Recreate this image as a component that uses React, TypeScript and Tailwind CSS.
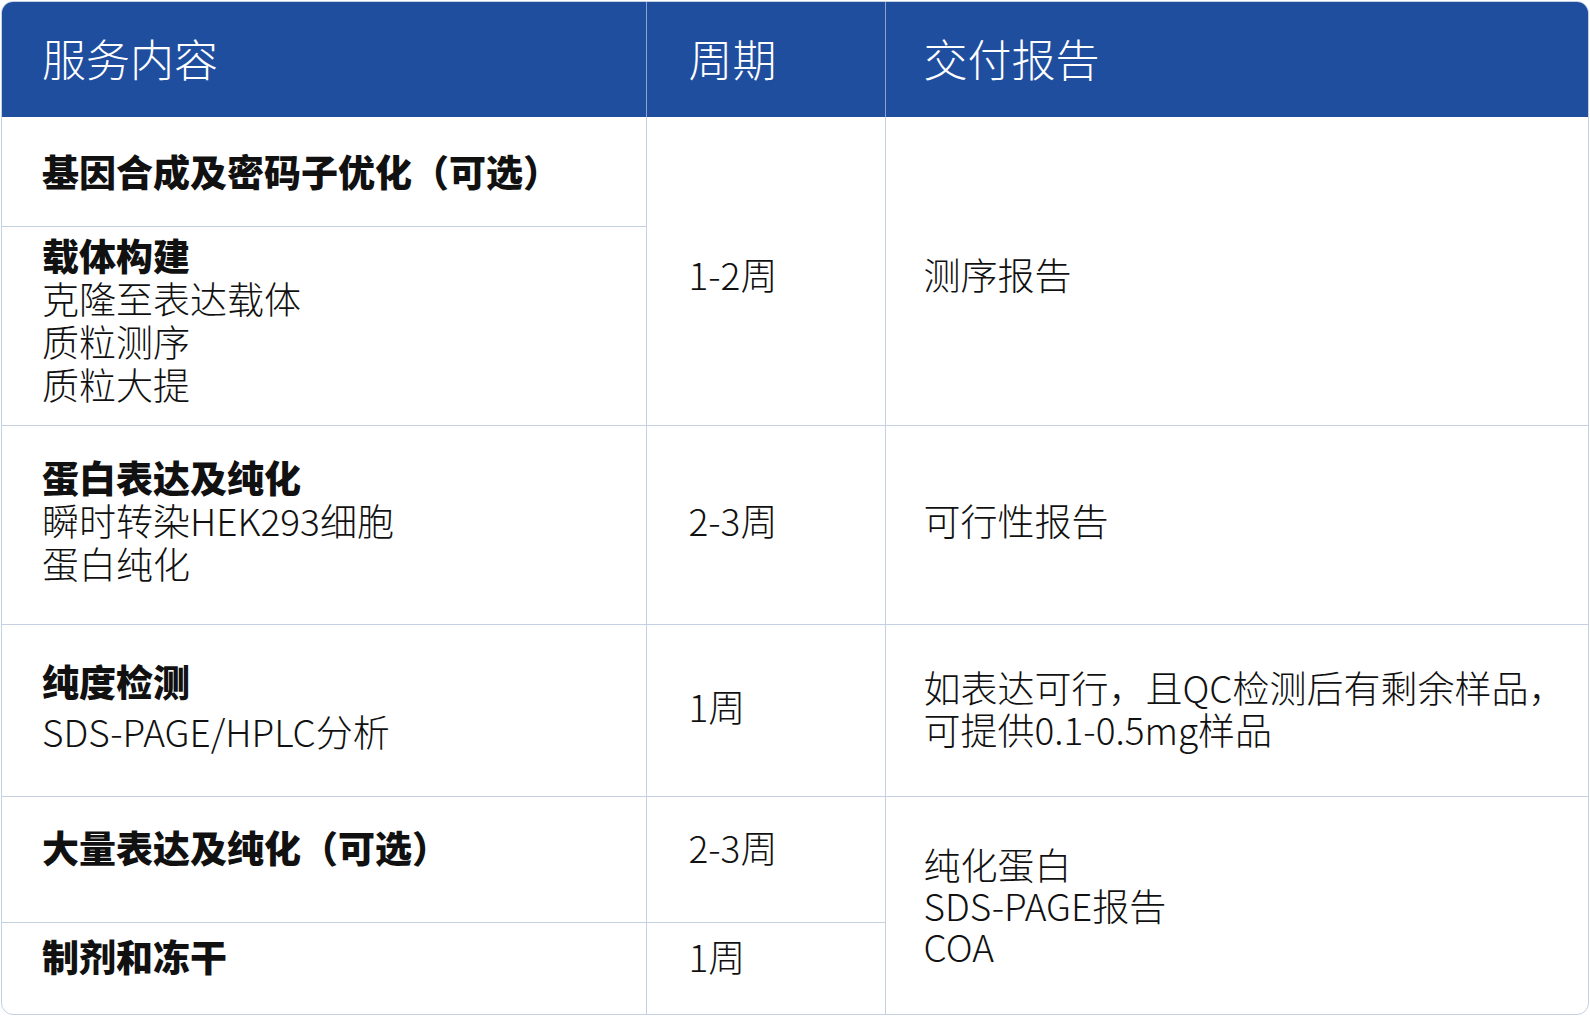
const font = { fontFamily: '"Noto Sans CJK SC", "Noto Sans", sans-serif' }

function Title({ children }: { children: React.ReactNode }) {
  return <div className="font-black leading-[43px]">{children}</div>
}

function Line({ children, className = '' }: { children: React.ReactNode; className?: string }) {
  return <div className={`font-light leading-[43px] ${className}`}>{children}</div>
}

const td = 'border border-[#c5d0e3] align-middle'

export default function App() {
  return (
    <div className="min-h-screen bg-white p-px" style={font}>
      <div className="w-[1588px] overflow-hidden rounded-[12px] border border-[#c5d0e3]">
        <table className="w-full table-fixed border-collapse text-[37px] text-[#111111]">
          <colgroup>
            <col className="w-[644px]" />
            <col className="w-[239px]" />
            <col />
          </colgroup>
          <thead>
            <tr className="h-[115px] bg-[#1f4e9f] text-[44px] text-white">
              <th className="border-r border-[#8ea3cc] pb-1 pl-10 text-left font-light">服务内容</th>
              <th className="border-r border-[#8ea3cc] pb-1 pl-[42px] text-left font-light">周期</th>
              <th className="pb-1 pl-[38px] text-left font-light">交付报告</th>
            </tr>
          </thead>
          <tbody>
            <tr className="h-[109px]">
              <td className={`${td} border-t-0 border-l-0 pl-10`}>
                <Title>基因合成及密码子优化（可选）</Title>
              </td>
              <td rowSpan={2} className={`${td} border-t-0 pl-[42px] pt-2`}>
                <Line>1-2周</Line>
              </td>
              <td rowSpan={2} className={`${td} border-t-0 border-r-0 pl-[38px] pt-2`}>
                <Line>测序报告</Line>
              </td>
            </tr>
            <tr className="h-[199px]">
              <td className={`${td} border-l-0 pb-3 pl-10`}>
                <Title>载体构建</Title>
                <Line>克隆至表达载体</Line>
                <Line>质粒测序</Line>
                <Line>质粒大提</Line>
              </td>
            </tr>
            <tr className="h-[199px]">
              <td className={`${td} border-l-0 pb-2 pl-10`}>
                <Title>蛋白表达及纯化</Title>
                <Line>瞬时转染HEK293细胞</Line>
                <Line>蛋白纯化</Line>
              </td>
              <td className={`${td} pb-2 pl-[42px]`}>
                <Line>2-3周</Line>
              </td>
              <td className={`${td} border-r-0 pb-2 pl-[38px]`}>
                <Line>可行性报告</Line>
              </td>
            </tr>
            <tr className="h-[172px]">
              <td className={`${td} border-l-0 pb-2 pl-10`}>
                <Title>纯度检测</Title>
                <Line className="mt-[7px]">SDS-PAGE/HPLC分析</Line>
              </td>
              <td className={`${td} pb-2 pl-[42px]`}>
                <Line>1周</Line>
              </td>
              <td className={`${td} border-r-0 pb-1 pl-[38px]`}>
                <div className="font-light leading-[42px]">如表达可行，且QC检测后有剩余样品，</div>
                <div className="font-light leading-[42px]">可提供0.1-0.5mg样品</div>
              </td>
            </tr>
            <tr className="h-[126px]">
              <td className={`${td} border-l-0 pb-6 pl-10`}>
                <Title>大量表达及纯化（可选）</Title>
              </td>
              <td className={`${td} pb-6 pl-[42px]`}>
                <Line>2-3周</Line>
              </td>
              <td rowSpan={2} className={`${td} border-r-0 border-b-0 pl-[38px]`}>
                <div className="font-light leading-[41px]">纯化蛋白</div>
                <div className="font-light leading-[41px]">SDS-PAGE报告</div>
                <div className="font-light leading-[41px]">COA</div>
              </td>
            </tr>
            <tr className="h-[92px]">
              <td className={`${td} border-l-0 border-b-0 pb-6 pl-10`}>
                <Title>制剂和冻干</Title>
              </td>
              <td className={`${td} border-b-0 pb-6 pl-[42px]`}>
                <Line>1周</Line>
              </td>
            </tr>
          </tbody>
        </table>
      </div>
    </div>
  )
}
